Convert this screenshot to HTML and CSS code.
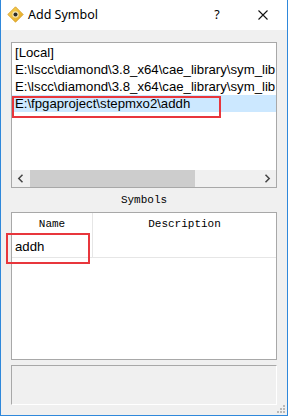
FILE: index.html
```html
<!DOCTYPE html>
<html>
<head>
<meta charset="utf-8">
<link rel="stylesheet" href="styles.css">
</head>
<body>
<div class="window">
  <div class="titlebar">
    <svg class="app-icon" width="17" height="17" viewBox="0 0 17 17">
      <defs>
        <linearGradient id="g" x1="0" y1="0" x2="1" y2="1">
          <stop offset="0" stop-color="#f8d45a"/>
          <stop offset="1" stop-color="#e3a51f"/>
        </linearGradient>
      </defs>
      <polygon points="8.5,0.8 16.2,8.5 8.5,16.2 0.8,8.5" fill="url(#g)" stroke="#d49a22" stroke-width="0.8"/>
      <circle cx="8.5" cy="8.5" r="3.2" fill="#f3e3b0"/>
      <circle cx="8.5" cy="8.5" r="2" fill="#2a2a2a"/>
    </svg>
    <span class="title">Add Symbol</span>
    <span class="help">?</span>
    <svg class="close" width="10" height="10" viewBox="0 0 10 10">
      <path d="M0.5 0.5 L9.5 9.5 M9.5 0.5 L0.5 9.5" stroke="#111" stroke-width="1.1" fill="none"/>
    </svg>
  </div>
  <div class="content">
    <div class="listbox">
      <div class="list-items">
        <div class="item">[Local]</div>
        <div class="item">E:\lscc\diamond\3.8_x64\cae_library\sym_lib</div>
        <div class="item">E:\lscc\diamond\3.8_x64\cae_library\sym_lib</div>
        <div class="item selected">E:\fpgaproject\stepmxo2\addh</div>
      </div>
      <div class="hscroll">
        <div class="arrow">
          <svg width="7" height="9" viewBox="0 0 7 9"><path d="M5.5 0.8 L1.8 4.5 L5.5 8.2" stroke="#444" stroke-width="1.5" fill="none"/></svg>
        </div>
        <div class="track"><div class="thumb"></div></div>
        <div class="arrow">
          <svg width="7" height="9" viewBox="0 0 7 9"><path d="M1.5 0.8 L5.2 4.5 L1.5 8.2" stroke="#444" stroke-width="1.5" fill="none"/></svg>
        </div>
      </div>
    </div>
    <div class="caption">Symbols</div>
    <div class="table">
      <div class="thead">
        <div class="th col-name">Name</div>
        <div class="th col-desc">Description</div>
      </div>
      <div class="tr">
        <div class="td col-name">addh</div>
        <div class="td col-desc"></div>
      </div>
    </div>
    <div class="status"></div>
  </div>
  <svg class="grip" width="8" height="8" viewBox="0 0 8 8">
    <rect x="6" y="0" width="2" height="2" fill="#b8b8b8"/>
    <rect x="3" y="3" width="2" height="2" fill="#b8b8b8"/>
    <rect x="6" y="3" width="2" height="2" fill="#b8b8b8"/>
    <rect x="0" y="6" width="2" height="2" fill="#b8b8b8"/>
    <rect x="3" y="6" width="2" height="2" fill="#b8b8b8"/>
    <rect x="6" y="6" width="2" height="2" fill="#b8b8b8"/>
  </svg>
  <div class="mark mark-list"></div>
  <div class="mark mark-name"></div>
</div>
</body>
</html>
```

FILE: styles.css
```css
* { box-sizing: border-box; }
html, body { margin: 0; padding: 0; background: #f0f0f0; }
body { font-family: "Segoe UI", "Noto Sans", "Liberation Sans", sans-serif; font-size: 12px; color: #000; }

.window {
  position: relative;
  width: 288px;
  height: 416px;
  background: #f0f0f0;
  border-left: 1px solid #2f88db;
  border-right: 1px solid #2f88db;
  border-bottom: 1px solid #2f88db;
  display: flex;
  flex-direction: column;
  overflow: hidden;
}

.titlebar {
  height: 30px;
  flex: none;
  background: #fff;
  display: flex;
  align-items: center;
  padding-left: 6px;
  padding-right: 19px;
}
.app-icon { flex: none; margin-right: 4px; margin-top: -1px; }
.title { flex: 1; font-size: 12.5px; white-space: nowrap; margin-top: -1px; }
.help { width: 14px; text-align: center; font-size: 12.5px; margin-right: 34px; margin-top: -1px; }
.close { flex: none; margin-top: -1px; }

.content {
  flex: 1;
  display: flex;
  flex-direction: column;
  padding: 12px 10px 10px 10px;
}

.listbox {
  height: 146px;
  flex: none;
  background: #fff;
  border: 1px solid #a8a8a8;
  display: flex;
  flex-direction: column;
}
.list-items { flex: 1; padding-top: 1px; overflow: hidden; }
.item {
  height: 17px;
  line-height: 17px;
  padding-left: 3px;
  white-space: nowrap;
  overflow: hidden;
  font-family: "Liberation Sans", Arial, sans-serif;
  font-size: 13.2px;
}
.item.selected { background: #cce8ff; }

.hscroll { height: 17px; flex: none; display: flex; background: #f0f0f0; }
.arrow { width: 17px; flex: none; display: flex; align-items: center; justify-content: center; }
.track { flex: 1; padding-left: 1px; display: flex; }
.thumb { width: 165px; flex: none; background: #cdcdcd; }

.caption {
  height: 24px;
  flex: none;
  line-height: 24px;
  text-align: center;
  font-family: "Liberation Mono", monospace;
  font-size: 11px;
}

.table {
  height: 148px;
  flex: none;
  background: #fff;
  border: 1px solid #a8a8a8;
}
.thead { display: flex; height: 23px; }
.tr { display: flex; height: 22px; border-bottom: 1px solid #e6e6e6; }
.col-name { width: 81px; flex: none; border-right: 1px solid #e6e6e6; }
.col-desc { flex: 1; }
.th {
  font-family: "Liberation Mono", monospace;
  font-size: 11px;
  line-height: 23px;
  text-align: center;
}
.td {
  line-height: 21px;
  padding-left: 3px;
  font-family: "Liberation Sans", Arial, sans-serif;
  font-size: 13.2px;
}

.status {
  flex: none;
  height: 40px;
  margin-top: 5px;
  background: #f0f0f0;
  border-top: 1px solid #a8a8a8;
  border-left: 1px solid #a8a8a8;
  border-bottom: 1px solid #fff;
  border-right: 1px solid #fff;
}

.grip { position: absolute; right: 2px; bottom: 2px; }

.mark { position: absolute; border: 2px solid #e8363c; }
.mark-list { left: 11px; top: 96px; width: 209px; height: 22px; }
.mark-name { left: 5px; top: 233px; width: 84px; height: 31px; }
```
